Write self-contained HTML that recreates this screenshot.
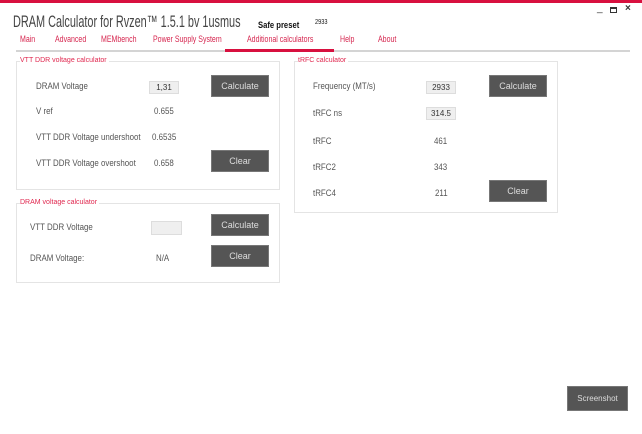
<!DOCTYPE html>
<html><head><meta charset="utf-8"><style>
*{margin:0;padding:0;box-sizing:border-box}
body{width:642px;height:434px;background:#fff;position:relative;overflow:hidden;font-family:"Liberation Sans","DejaVu Sans",sans-serif;color:#444}
.a{position:absolute;white-space:nowrap;transform-origin:0 0}
.t{font-size:9px;color:#555;transform:scaleX(0.88)}
.tab{font-size:9px;color:#d6264f;top:34px;transform:scaleX(0.78)}
.box{position:absolute;border:1px solid #e4e4e4}
.lg{position:absolute;font-size:7px;color:#e0284f;background:#fff;padding-right:2px;top:-5px;left:3px}
.btn{position:absolute;background:#555;color:#ddd;font-size:9px;text-align:center;border:1px solid #777}
.in{position:absolute;background:#efefef;border:1px solid #ddd;font-size:8px;color:#333;text-align:center}
</style></head><body>
<div class="a" style="left:0;top:0;width:642px;height:3px;background:#d8103f"></div>
<div class="a" style="left:597px;top:3px;font-size:10px;color:#333">_</div>
<div class="a" style="left:610px;top:7px;width:7px;height:6px;border:1px solid #333;border-top-width:2px"></div>
<div class="a" style="left:625px;top:3px;font-size:10px;color:#333;font-weight:bold">×</div>
<div class="a" style="left:13px;top:13px;font-size:16.5px;color:#444;transform:scaleX(0.66)">DRAM Calculator for Rvzen™ 1.5.1 bv 1usmus</div>
<div class="a" style="left:258px;top:20px;font-size:9px;font-weight:bold;color:#111;transform:scaleX(0.85)">Safe preset</div>
<div class="a" style="left:315px;top:19px;font-size:7px;color:#111;transform:scaleX(0.8)">2933</div>
<div class="a tab" style="left:20px">Main</div>
<div class="a tab" style="left:55px">Advanced</div>
<div class="a tab" style="left:101px">MEMbench</div>
<div class="a tab" style="left:153px">Power Supply System</div>
<div class="a tab" style="left:247px">Additional calculators</div>
<div class="a tab" style="left:340px">Help</div>
<div class="a tab" style="left:378px">About</div>
<div class="a" style="left:16px;top:50px;width:614px;height:2px;background:#d4d4d4"></div>
<div class="a" style="left:225px;top:49px;width:109px;height:3px;background:#d8103f"></div>

<div class="box" style="left:16px;top:61px;width:264px;height:129px"><div class="lg">VTT DDR voltage calculator</div></div>
<div class="a t" style="left:36px;top:81px">DRAM Voltage</div>
<div class="in" style="left:149px;top:81px;width:30px;height:13px;line-height:11px">1,31</div>
<div class="btn" style="left:211px;top:75px;width:58px;height:22px;line-height:20px">Calculate</div>
<div class="a t" style="left:36px;top:106px">V ref</div><div class="a t" style="left:154px;top:106px">0.655</div>
<div class="a t" style="left:36px;top:132px">VTT DDR Voltage undershoot</div><div class="a t" style="left:152px;top:132px">0.6535</div>
<div class="a t" style="left:36px;top:158px">VTT DDR Voltage overshoot</div><div class="a t" style="left:154px;top:158px">0.658</div>
<div class="btn" style="left:211px;top:150px;width:58px;height:22px;line-height:20px">Clear</div>

<div class="box" style="left:16px;top:203px;width:264px;height:80px"><div class="lg">DRAM voltage calculator</div></div>
<div class="a t" style="left:30px;top:222px">VTT DDR Voltage</div>
<div class="in" style="left:151px;top:221px;width:31px;height:14px"></div>
<div class="btn" style="left:211px;top:214px;width:58px;height:22px;line-height:20px">Calculate</div>
<div class="a t" style="left:30px;top:253px">DRAM Voltage:</div><div class="a t" style="left:156px;top:253px">N/A</div>
<div class="btn" style="left:211px;top:245px;width:58px;height:22px;line-height:20px">Clear</div>

<div class="box" style="left:294px;top:61px;width:264px;height:152px"><div class="lg">tRFC calculator</div></div>
<div class="a t" style="left:313px;top:81px">Frequency (MT/s)</div>
<div class="in" style="left:426px;top:81px;width:30px;height:13px;line-height:11px">2933</div>
<div class="btn" style="left:489px;top:75px;width:58px;height:22px;line-height:20px">Calculate</div>
<div class="a t" style="left:313px;top:108px">tRFC ns</div>
<div class="in" style="left:426px;top:107px;width:30px;height:13px;line-height:11px">314.5</div>
<div class="a t" style="left:313px;top:136px">tRFC</div><div class="a t" style="left:434px;top:136px">461</div>
<div class="a t" style="left:313px;top:162px">tRFC2</div><div class="a t" style="left:434px;top:162px">343</div>
<div class="a t" style="left:313px;top:188px">tRFC4</div><div class="a t" style="left:435px;top:188px">211</div>
<div class="btn" style="left:489px;top:180px;width:58px;height:22px;line-height:20px">Clear</div>

<div class="btn" style="left:567px;top:386px;width:61px;height:25px;line-height:23px;font-size:8px">Screenshot</div>
</body></html>
